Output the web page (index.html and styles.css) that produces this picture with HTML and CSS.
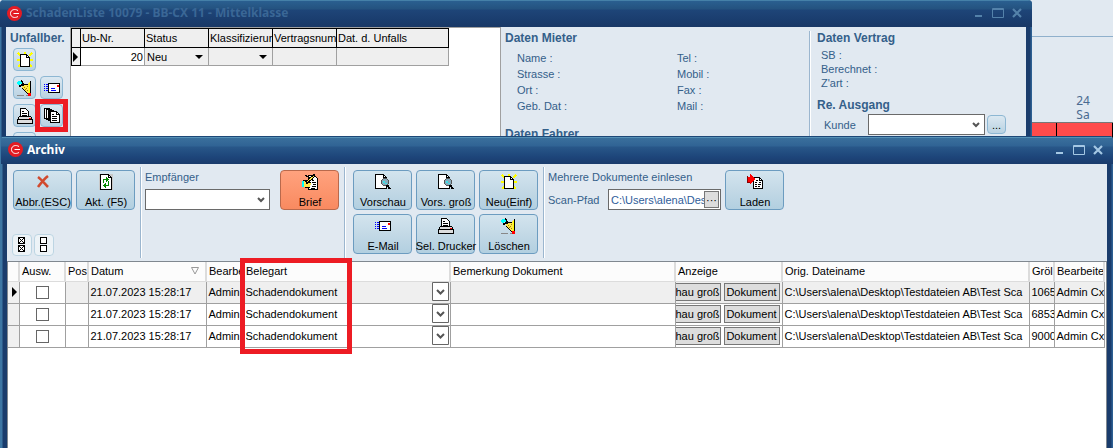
FILE: index.html
```html
<!DOCTYPE html>
<html lang="de">
<head>
  <meta charset="UTF-8" />
  <meta name="viewport" content="width=device-width, initial-scale=1.0"/>
  <title>Archiv</title>
  <link rel="stylesheet" href="styles.css">
</head>
<body>

<svg class="defs" aria-hidden="true">
  <symbol id="logo" viewBox="0 0 15 15">
    <circle cx="7.5" cy="7.5" r="7.5" fill="#e31b23"/>
    <path d="M11 4.500C8 2.600 3.500 3.500 3.500 7.500S8 12.400 11 10.500M6.500 7.500H12" fill="none" stroke="#fff" stroke-width="1"/>
  </symbol>
  <symbol id="min" viewBox="0 0 12 12"><path d="M2 9H9" stroke="currentColor" stroke-width="2"/></symbol>
  <symbol id="max" viewBox="0 0 12 12"><path d="M.5 1.500H11.500V10.500H.5ZM0 2.500H12" fill="none" stroke="currentColor"/></symbol>
  <symbol id="close" viewBox="0 0 12 12"><path d="M2 2L10 10M10 2L2 10" stroke="currentColor" stroke-width="2.200"/></symbol>
  <symbol id="new" viewBox="0 0 16 16" shape-rendering="crispEdges">
    <path d="M1 1L5 5M8 0V3M15 1L12 4M0 8H3M13 8H16M1 15L4 12M15 15L12 12" stroke="#ff0" stroke-width="2"/>
    <path d="M3.500 2.500H9.500L12.500 5.500V14.500H3.500Z" fill="#fff" stroke="#000"/>
    <path d="M9.500 2.500V5.500H12.500" fill="none" stroke="#000"/>
  </symbol>
  <symbol id="erase" viewBox="0 0 16 16" shape-rendering="crispEdges">
    <path d="M5 6L8 4H11L13 1V13H10L6 9Z" fill="#ffe84a"/>
    <path d="M5 6L8 4H11M5 8L10 13H13" fill="none" stroke="#000"/>
    <path d="M13.500 1V14" stroke="#000"/>
    <path d="M12.500 3V13" stroke="#ff0"/>
    <path d="M1 1H4V2H5V4H3V5H1V4H0V2H1Z" fill="#0ff"/>
    <path d="M4 0H5V1H6V3H7V4H6V6H4V7H2V5H4V4H5V2H4Z" fill="#000"/>
    <path d="M7 7.500H8M9 8.500H10M8 9.500H9M10 6.500H11M10 10.500H11" stroke="#a80"/>
    <path d="M0 15.500H7M9 15.500H11" stroke="#888"/>
    <path d="M11 13H14V16H11Z" fill="#f00"/>
  </symbol>
  <symbol id="mail" viewBox="0 0 16 16" shape-rendering="crispEdges">
    <path d="M4.500 3.500H15.500V12.500H4.500Z" fill="#fff" stroke="#000"/>
    <path d="M0 4.500H1M2 4.500H4M0 6.500H1M2 6.500H4M0 8.500H1M2 8.500H4M0 10.500H1M2 10.500H4M7 8.500H11M7 10.500H12" stroke="#00f"/>
    <path d="M13 5H15V7H13Z" fill="#f00"/>
  </symbol>
  <symbol id="print" viewBox="0 0 16 16" shape-rendering="crispEdges">
    <path d="M3.500 8.500V.5H8.500L11.500 3.500V8.500" fill="#fff" stroke="#000"/>
    <path d="M5 3.500H7M5 5.500H10M5 7.500H10" stroke="#000"/>
    <path d="M.5 11.500L2.500 8.500H13.500L15.500 11.500V15.500H.5Z" fill="#ddd" stroke="#000"/>
    <path d="M0 11.500H16" stroke="#000"/><path d="M12 10H14" stroke="#f00"/>
  </symbol>
  <symbol id="docs" viewBox="0 0 16 16" shape-rendering="crispEdges">
    <path d="M.5 .5H5.500V10.500H.5ZM2.500 1.500H7.500V11.500H2.500ZM4.500 2.500H9.500V12.500H4.500Z" fill="#fff" stroke="#000"/>
    <path d="M6.500 3.500H12.500L15.500 6.500V14.500H6.500Z" fill="#fff" stroke="#000"/>
    <path d="M8 6.500H10M8 8.500H13M8 10.500H13M8 12.500H13M12.500 4V6.500H15" fill="none" stroke="#000"/>
  </symbol>
  <symbol id="cancel" viewBox="0 0 16 16">
    <path d="M3 3C6 5 10 10 13 13M13 2C9 5 6 9 3 13" fill="none" stroke="#d14a2e" stroke-width="2.600"/>
  </symbol>
  <symbol id="refresh" viewBox="0 0 16 16" shape-rendering="crispEdges">
    <path d="M1 0H15V16H1Z" fill="#c8c8c8"/>
    <path d="M2.500 .5H10.500L13.500 3.500V15.500H2.500Z" fill="#fff" stroke="#000"/>
    <path d="M10.500 .5V3.500H13.500" fill="none" stroke="#000"/>
    <path d="M5.500 9V5.500H9M10.500 7V11.500H7" fill="none" stroke="#080"/>
    <path d="M8 3L11 5.500L8 8ZM8 9L5 11.500L8 14Z" fill="#080"/>
  </symbol>
  <symbol id="letter" viewBox="0 0 16 16" shape-rendering="crispEdges">
    <path d="M6.500 1.500H12.500L15.500 4.500V15.500H6.500Z" fill="#fff" stroke="#000"/>
    <path d="M10 8.500H14M11 10.500H14M10 12.500H14M9 14.500H13" stroke="#000"/>
    <path d="M1 7H6L9 9L8 13H3L1 12Z" fill="#ffe84a"/>
    <path d="M1 6.500H6L8.500 9M3 13.500H8" fill="none" stroke="#000"/>
    <path d="M0 7H2V13H0Z" fill="#0ff"/>
    <path d="M3 1L12 7" stroke="#000"/>
    <path d="M4 9L13 1" stroke="#000" stroke-width="3"/><path d="M5 8L12 2" stroke="#ffe84a"/>
  </symbol>
  <symbol id="preview" viewBox="0 0 16 16" shape-rendering="crispEdges">
    <path d="M.5 .5H8.500L11.500 3.500V14.500H.5Z" fill="#fff" stroke="#000"/>
    <path d="M8.500 .5V3.500H11.500" fill="none" stroke="#000"/>
    <circle cx="10" cy="8" r="3.500" fill="#8ab" stroke="#555"/>
    <path d="M8 7H10V9H8ZM10 9H12V10H10Z" fill="#3fe0e6"/>
    <path d="M12 11L15 15" stroke="#000" stroke-width="2"/>
  </symbol>
  <symbol id="load" viewBox="0 0 16 16" shape-rendering="crispEdges">
    <path d="M6.500 3.500H12.500L15.500 6.500V14.500H6.500Z" fill="#fff" stroke="#000"/>
    <path d="M9 6.500H11M12 8.500H14M8 8.500H10M8 10.500H10M11 10.500H14M8 12.500H10M11 12.500H13M12.500 4V6.500H15" fill="none" stroke="#000"/>
    <path d="M0 3H3V0L8 5L3 10V8H0Z" fill="#f00"/><path d="M.5 2V8H3" fill="none" stroke="#800"/>
  </symbol>
  <symbol id="all" viewBox="0 0 8 16" shape-rendering="crispEdges">
    <path d="M.5 .5H6.500V6.500H.5ZM.5 8.500H6.500V14.500H.5Z" fill="#fff" stroke="#000"/>
    <path d="M1 1L6 6M6 1L1 6M1 9L6 14M6 9L1 14" stroke="#000"/>
  </symbol>
  <symbol id="none" viewBox="0 0 8 16" shape-rendering="crispEdges">
    <path d="M.5 .5H6.500V6.500H.5ZM.5 8.500H6.500V14.500H.5Z" fill="#fff" stroke="#000"/>
  </symbol>
</svg>

<!-- Kalender im Hintergrund -->
<div class="calendar">
  <div class="calendar-head"></div>
  <div class="calendar-days"><div class="day">24<br>Sa</div></div>
  <div class="calendar-bar"><div class="booking"></div></div>
</div>

<section class="window window-list">
  <header class="titlebar">
    <svg class="logo"><use href="#logo"/></svg>
    <h1>SchadenListe 10079 - BB-CX 11 - Mittelklasse</h1>
    <div class="controls">
      <button aria-label="Minimieren"><svg><use href="#min"/></svg></button>
      <button aria-label="Maximieren"><svg><use href="#max"/></svg></button>
      <button aria-label="Schließen"><svg><use href="#close"/></svg></button>
    </div>
  </header>
  <div class="list-body">
    <aside class="side">
      <h2>Unfallber.</h2>
      <div class="side-buttons">
        <button class="small-btn first" aria-label="Neu"><svg><use href="#new"/></svg></button>
        <button class="small-btn" aria-label="Löschen"><svg><use href="#erase"/></svg></button>
        <button class="small-btn" aria-label="E-Mail"><svg><use href="#mail"/></svg></button>
        <button class="small-btn" aria-label="Drucken"><svg><use href="#print"/></svg></button>
        <button class="small-btn marked" aria-label="Archiv"><svg><use href="#docs"/></svg></button>
        <button class="small-btn" aria-label="Weitere"></button>
      </div>
    </aside>

    <div class="claims-pane">
      <table class="claims">
        <colgroup><col class="c-mark"><col class="c-std"><col class="c-std"><col class="c-std"><col class="c-std"><col class="c-date"></colgroup>
        <thead>
          <tr><th></th><th>Ub-Nr.</th><th>Status</th><th>Klassifizierur</th><th>Vertragsnum</th><th>Dat. d. Unfalls</th></tr>
        </thead>
        <tbody>
          <tr>
            <td class="mark"><i class="pointer"></i></td>
            <td class="num">20</td>
            <td><select class="flat-select" aria-label="Status"><option>Neu</option></select></td>
            <td><select class="flat-select" aria-label="Klassifizierung"><option></option></select></td>
            <td></td>
            <td></td>
          </tr>
        </tbody>
      </table>
    </div>

    <div class="renter">
      <h2>Daten Mieter</h2>
      <div class="renter-grid">
        <span>Name :</span><span>Tel :</span>
        <span>Strasse :</span><span>Mobil :</span>
        <span>Ort :</span><span>Fax :</span>
        <span>Geb. Dat :</span><span>Mail :</span>
      </div>
      <h2>Daten Fahrer</h2>
    </div>

    <div class="contract">
      <h2>Daten Vertrag</h2>
      <div class="contract-lines">
        <span>SB :</span>
        <span>Berechnet :</span>
        <span>Z'art :</span>
      </div>
      <h2>Re. Ausgang</h2>
      <div class="customer">
        <label for="kunde">Kunde</label>
        <select id="kunde" class="combo"><option></option></select>
        <button class="more-btn">...</button>
      </div>
    </div>
  </div>
</section>

<section class="window window-archive">
  <header class="titlebar">
    <svg class="logo"><use href="#logo"/></svg>
    <h1>Archiv</h1>
    <div class="controls">
      <button aria-label="Minimieren"><svg><use href="#min"/></svg></button>
      <button aria-label="Maximieren"><svg><use href="#max"/></svg></button>
      <button aria-label="Schließen"><svg><use href="#close"/></svg></button>
    </div>
  </header>

  <div class="toolbar">
    <div class="group group-main">
      <div class="row">
        <button class="tool"><svg><use href="#cancel"/></svg>Abbr.(ESC)</button>
        <button class="tool"><svg><use href="#refresh"/></svg>Akt. (F5)</button>
      </div>
      <div class="row select-row">
        <button class="check-btn" aria-label="Alle auswählen"><svg><use href="#all"/></svg></button>
        <button class="check-btn" aria-label="Keine auswählen"><svg><use href="#none"/></svg></button>
      </div>
    </div>

    <div class="group group-receiver">
      <div class="field">
        <label for="empfaenger">Empfänger</label>
        <select id="empfaenger" class="combo"><option></option></select>
      </div>
      <button class="tool tool-active"><svg><use href="#letter"/></svg>Brief</button>
    </div>

    <div class="group group-actions">
      <button class="tool"><svg><use href="#preview"/></svg>Vorschau</button>
      <button class="tool"><svg><use href="#preview"/></svg>Vors. groß</button>
      <button class="tool"><svg><use href="#new"/></svg>Neu(Einf)</button>
      <button class="tool"><svg><use href="#mail"/></svg>E-Mail</button>
      <button class="tool"><svg><use href="#print"/></svg>Sel. Drucker</button>
      <button class="tool"><svg><use href="#erase"/></svg>Löschen</button>
    </div>

    <div class="group group-scan">
      <div class="field">
        <span>Mehrere Dokumente einlesen</span>
        <div class="scan-row">
          <label for="pfad">Scan-Pfad</label>
          <div class="path">
            <input id="pfad" type="text" value="C:\Users\alena\Des">
            <button aria-label="Durchsuchen">···</button>
          </div>
        </div>
      </div>
      <button class="tool"><svg><use href="#load"/></svg>Laden</button>
    </div>
  </div>

  <div class="docs-pane">
    <table class="docs">
      <colgroup>
        <col class="d-mark"><col class="d-check"><col class="d-pos"><col class="d-date"><col class="d-user"><col class="d-type">
        <col class="d-note"><col class="d-show"><col><col class="d-size"><col class="d-editor">
      </colgroup>
      <thead>
        <tr>
          <th></th><th>Ausw.</th><th>Pos</th><th><div class="sorted">Datum<svg viewBox="0 0 8 8"><path d="M.5 .5H7.500L4 7Z"/></svg></div></th><th>Bearbe</th><th>Belegart</th>
          <th>Bemerkung Dokument</th><th>Anzeige</th><th>Orig. Dateiname</th><th>Gröl</th><th>Bearbeite</th>
        </tr>
      </thead>
      <tbody>
        <tr class="current">
          <td class="mark"><i class="pointer"></i></td>
          <td class="check"><input type="checkbox" aria-label="Auswahl 1"></td>
          <td></td><td>21.07.2023 15:28:17</td><td>Admin</td>
          <td><select class="cell-select" aria-label="Belegart 1"><option>Schadendokument</option></select></td>
          <td></td>
          <td class="show"><div><button class="cut">hau groß</button><button>Dokument</button></div></td>
          <td>C:\Users\alena\Desktop\Testdateien AB\Test Sca</td><td>1065</td><td>Admin Cx</td>
        </tr>
        <tr>
          <td class="mark"></td>
          <td class="check"><input type="checkbox" aria-label="Auswahl 2"></td>
          <td></td><td>21.07.2023 15:28:17</td><td>Admin</td>
          <td><select class="cell-select" aria-label="Belegart 2"><option>Schadendokument</option></select></td>
          <td></td>
          <td class="show"><div><button class="cut">hau groß</button><button>Dokument</button></div></td>
          <td>C:\Users\alena\Desktop\Testdateien AB\Test Sca</td><td>6853</td><td>Admin Cx</td>
        </tr>
        <tr>
          <td class="mark"></td>
          <td class="check"><input type="checkbox" aria-label="Auswahl 3"></td>
          <td></td><td>21.07.2023 15:28:17</td><td>Admin</td>
          <td><select class="cell-select" aria-label="Belegart 3"><option>Schadendokument</option></select></td>
          <td></td>
          <td class="show"><div><button class="cut">hau groß</button><button>Dokument</button></div></td>
          <td>C:\Users\alena\Desktop\Testdateien AB\Test Sca</td><td>9000</td><td>Admin Cx</td>
        </tr>
      </tbody>
    </table>
    <div class="highlight"></div>
  </div>
</section>

</body>
</html>
```
FILE: styles.css
```css
:root {
  --panel: #e1e9f1;
  --label: #34608a;
  --frame: #1a3c6c;
  --grid: #a0a0a0;
  --red: #ed1c24;
}

* {
  box-sizing: border-box;
}

body {
  margin: 0;
  height: 100vh;
  overflow: hidden;
  position: relative;
  background: var(--panel);
  font-family: "Liberation Sans", Arial, sans-serif;
  font-size: 11px;
  line-height: 14px;
  color: #000;
}

button, select, input {
  font: inherit;
  color: inherit;
  margin: 0;
  padding: 0;
}

h1, h2 {
  margin: 0;
}

h2 {
  font-size: 12px;
  line-height: 14px;
  color: var(--label);
}

.defs {
  display: none;
}

/* Kalender */
.calendar-head {
  height: 37px;
  border-bottom: 1px solid #8fb0cc;
}

.calendar-days {
  display: flex;
  justify-content: flex-end;
  height: 86px;
  align-items: flex-end;
  border-bottom: 1px solid #777;
}

.day {
  width: 60px;
  text-align: center;
  color: #4a6a90;
  font-family: "Noto Sans", sans-serif;
  font-size: 12px;
}

.calendar-bar {
  display: flex;
  justify-content: flex-end;
  height: 20px;
  background: #ff4b4b;
}

.booking {
  width: 57px;
  border: solid #000;
  border-width: 0 1px;
}

/* Fenster */
.window {
  position: absolute;
  bottom: 0;
  display: flex;
  flex-direction: column;
  padding: 0 6px;
  background: linear-gradient(90deg, #3d76a3 0 1px, var(--frame) 2px calc(100% - 2px), #2c5f92 calc(100% - 1px));
  border-radius: 4px 4px 0 0;
  overflow: hidden;
}

.window-list {
  top: 0;
  left: 0;
  right: 81px;
}

.window-archive {
  top: 136px;
  left: 1px;
  right: 0;
}

.titlebar {
  display: flex;
  align-items: center;
  flex: none;
  height: 28px;
  margin: 0 -6px;
  padding: 0 9px 2px 7px;
  border-top: 1px solid #1d4878;
  background: linear-gradient(#5590b5 0 1px, #3a6f9c 1px, #306394 9px, #285789 10px, #1d457a 20px, #1a3b6c);
  color: #fff;
}

.window-list .titlebar {
  height: 27px;
  padding-bottom: 1px;
  border-top: 0;
  background: linear-gradient(#4580a8 0 1px, #2a5f90 1px, #24527f 9px, #1e4578 10px, #1a3d6e 20px, #193866);
  color: #3a6796;
}

.titlebar h1 {
  flex: 1;
  font-family: "Noto Sans", sans-serif;
  font-size: 12px;
  line-height: 16px;
}

.logo {
  width: 15px;
  height: 15px;
  margin-right: 4px;
}

.controls {
  display: flex;
  gap: 7px;
  color: #a5c8e4;
}

.window-list .controls {
  color: #5482aa;
}

.controls button {
  width: 12px;
  height: 12px;
  border: 0;
  background: none;
}

.controls svg {
  display: block;
  width: 12px;
  height: 12px;
}

/* Schadenliste */
.list-body {
  display: flex;
  flex: 1;
  background: var(--panel);
}

.side {
  width: 64px;
  padding: 4px 0 0 4px;
}

.side-buttons {
  display: grid;
  grid-template-columns: 23px 23px;
  gap: 5px 4px;
  padding: 3px 0 0 3px;
}

.small-btn {
  position: relative;
  display: flex;
  align-items: center;
  justify-content: center;
  height: 23px;
  padding: 1px 0 0 1px;
  border: 1px solid #8db7d3;
  border-radius: 4px;
  background: linear-gradient(#dbe8f1, #b9d2e2);
}

.small-btn.first {
  width: 23px;
  grid-column: 1 / 3;
}

.small-btn svg {
  flex: none;
  width: 16px;
  height: 16px;
}

.small-btn.marked::after {
  content: "";
  position: absolute;
  inset: -6px;
  border: 5px solid var(--red);
}

.claims-pane {
  width: 431px;
  border: solid var(--grid);
  border-width: 1px 1px 0;
  background: #fff;
}

table {
  border-collapse: collapse;
  table-layout: fixed;
}

th, td {
  padding: 0 0 0 2px;
  font-weight: normal;
  text-align: left;
  white-space: nowrap;
  overflow: hidden;
}

.claims {
  width: 378px;
}

.c-mark { width: 9px; }
.c-std { width: 64px; }

.claims th {
  height: 19px;
  padding-left: 1px;
  border: 1px solid #000;
  background: #efefef;
}

.claims td {
  height: 18px;
  border: 1px solid var(--grid);
  background: #efefef;
}

.claims td.mark {
  border-color: #000;
  padding: 0 0 0 1px;
}

.claims td.num {
  background: #fff;
  text-align: right;
  padding-right: 1px;
}

.pointer {
  display: block;
  width: 0;
  border: solid transparent;
  border-width: 5px 0 5px 5px;
  border-left-color: #000;
}

.flat-select {
  display: block;
  width: 100%;
  height: 16px;
  appearance: none;
  border: 0;
  background: url("data:image/svg+xml,%3Csvg xmlns='http://www.w3.org/2000/svg' width='8' height='4'%3E%3Cpath d='M0 0H8L4 4Z'/%3E%3C/svg%3E") no-repeat right 5px center;
}

.renter {
  flex: 1;
  margin-top: 4px;
  padding-left: 4px;
  color: var(--label);
}

.renter-grid {
  display: grid;
  grid-template-columns: 160px 1fr;
  line-height: 16px;
  padding: 5px 0 13px 12px;
}

.contract {
  width: 217px;
  margin-top: 4px;
  padding-left: 7px;
  border-left: 1px solid #9bb6cf;
  box-shadow: inset 1px 0 #fff;
  color: var(--label);
}

.contract-lines {
  display: flex;
  flex-direction: column;
  padding: 3px 0 8px 4px;
}

.customer {
  display: flex;
  align-items: center;
  padding: 2px 0 0 7px;
}

.customer label {
  width: 44px;
}

.customer .combo {
  width: 117px;
}

.combo {
  height: 21px;
  appearance: none;
  border: 1px solid #6a6a6a;
  border-radius: 0;
  background: #fff url("data:image/svg+xml,%3Csvg xmlns='http://www.w3.org/2000/svg' width='8' height='6'%3E%3Cpath d='M1 1L4 4L7 1' fill='none' stroke='%23555' stroke-width='2'/%3E%3C/svg%3E") no-repeat right 4px center;
}

.more-btn {
  width: 19px;
  height: 19px;
  margin-left: 2px;
  border: 1px solid #8db7d3;
  border-radius: 4px;
  background: linear-gradient(#dbe8f1, #b9d2e2);
  color: #000;
}

/* Archiv */
.toolbar {
  display: flex;
  flex: none;
  height: 97px;
  padding: 3px 0;
  background: var(--panel);
  color: var(--label);
}

.group {
  flex: none;
  padding-top: 3px;
  border-right: 1px solid #9bb6cf;
  box-shadow: 1px 0 #fff;
}

.row {
  display: flex;
  gap: 4px;
}

.tool {
  display: flex;
  flex-direction: column;
  align-items: center;
  gap: 5px;
  flex: none;
  width: 59px;
  height: 40px;
  padding: 3px 0 0 1px;
  border: 1px solid #6c9cc0;
  border-radius: 4px;
  background: linear-gradient(#d3e4ee, #c3d9e6 50%, #b2cfe0);
  color: #000;
  white-space: nowrap;
}

.tool svg {
  flex: none;
  width: 16px;
  height: 16px;
}

.tool-active {
  border-color: #b9694c;
  background: linear-gradient(#ffa27e, #f98a60);
}

.group-main {
  width: 134px;
  padding-left: 6px;
}

.select-row {
  gap: 2px;
  margin: 24px 0 0 -1px;
}

.check-btn {
  display: flex;
  align-items: center;
  justify-content: center;
  width: 20px;
  height: 22px;
  border: 1px solid #bdd5e3;
  border-radius: 4px;
  background: #edf3f7;
}

.check-btn svg {
  width: 8px;
  height: 16px;
}

.group-receiver {
  display: flex;
  align-items: flex-start;
  gap: 10px;
  width: 204px;
  padding-left: 4px;
}

.field {
  display: flex;
  flex-direction: column;
  gap: 5px;
}

.field .combo {
  width: 125px;
}

.group-actions {
  display: grid;
  grid-template-columns: repeat(3, 59px);
  grid-auto-rows: 40px;
  gap: 4px;
  width: 199px;
  padding-left: 8px;
}

.group-scan {
  display: flex;
  align-items: flex-start;
  gap: 4px;
  padding-left: 4px;
  border: 0;
  box-shadow: none;
}

.scan-row {
  display: flex;
  align-items: center;
}

.scan-row label {
  width: 60px;
}

.path {
  display: flex;
  width: 113px;
  height: 21px;
  padding: 1px;
  border: 1px solid #6a6a6a;
  background: #fff;
}

.path input {
  flex: 1;
  min-width: 0;
  padding-left: 1px;
  border: 0;
  color: #2f5d9a;
}

.path button {
  width: 15px;
  border: 1px solid #777;
  background: #ddd;
  color: #000;
  line-height: 12px;
}

.docs-pane {
  position: relative;
  flex: 1;
  padding-right: 1px;
  border: 1px solid #808890;
  border-bottom: 0;
  background: #fff;
}

.docs {
  width: 100%;
}

.d-mark { width: 11px; }
.d-check { width: 46px; }
.d-pos { width: 23px; }
.d-date { width: 118px; }
.d-user { width: 37px; }
.d-type { width: 207px; }
.d-note { width: 225px; }
.d-show { width: 107px; }
.d-size { width: 25px; }
.d-editor { width: 50px; }

.docs th {
  height: 19px;
  padding-left: 2px;
  border-right: 2px solid #dcdcdc;
  border-bottom: 1px solid #dcdcdc;
  background: #fcfcfc;
}

.docs td {
  height: 22px;
  border-right: 1px solid var(--grid);
  border-bottom: 1px solid var(--grid);
}

.docs .current td {
  background: #efefef;
}

.docs td.mark {
  padding-left: 4px;
  background: #f0f0f0;
}

.docs td.check, .docs .current td.check {
  padding: 0;
  background: #fff;
  text-align: center;
}

.check input {
  display: block;
  width: 13px;
  height: 13px;
  margin: 0 auto;
  appearance: none;
  border: 1px solid #666;
  background: #fff;
}

.sorted {
  display: flex;
  justify-content: space-between;
  align-items: center;
  padding-right: 6px;
}

.sorted svg {
  width: 8px;
  height: 8px;
  fill: none;
  stroke: #999;
}

/* Auswahlfeld mit Pfeilkasten in der Zelle */
.cell-select {
  display: block;
  width: 100%;
  height: 20px;
  appearance: none;
  border: 0;
  background: url("data:image/svg+xml,%3Csvg xmlns='http://www.w3.org/2000/svg' width='17' height='19'%3E%3Cpath d='M.5 .5H16.5V18.5H.5Z' fill='%23fff' stroke='%23666'/%3E%3Cpath d='M5 8L8.5 11.5L12 8' fill='none' stroke='%23555' stroke-width='2'/%3E%3C/svg%3E") no-repeat right 1px top;
}

.docs td.show {
  padding: 0;
}

.show div {
  display: flex;
  gap: 3px;
}

.show button {
  width: 56px;
  height: 18px;
  border: 1px solid #777;
  background: #ddd;
}

.show .cut {
  width: 45px;
  border-left: 0;
}

.highlight {
  position: absolute;
  top: -4px;
  left: 232px;
  width: 112px;
  height: 96px;
  border: 5px solid var(--red);
}
```
